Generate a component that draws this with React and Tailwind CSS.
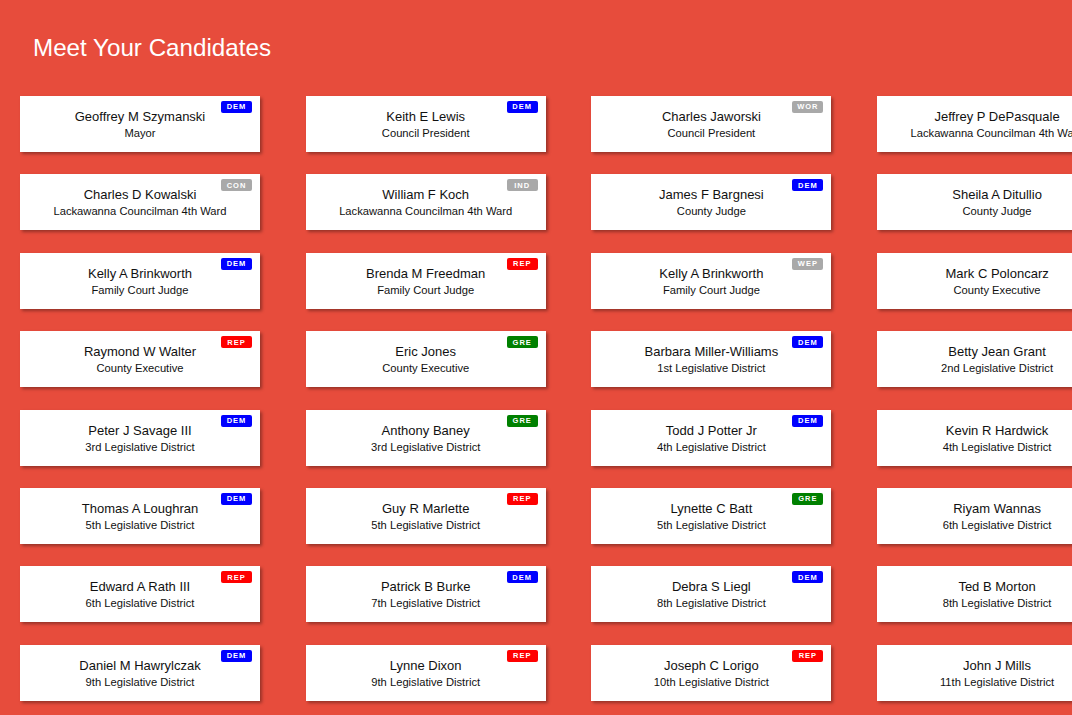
const badgeColors = {
  DEM: "bg-[#0000ff]",
  REP: "bg-[#ff0000]",
  GRE: "bg-[#008000]",
  WOR: "bg-[#a9a9a9]",
  CON: "bg-[#a9a9a9]",
  IND: "bg-[#a9a9a9]",
  WEP: "bg-[#a9a9a9]",
};

const candidates = [
  ["Geoffrey M Szymanski", "Mayor", "DEM"],
  ["Keith E Lewis", "Council President", "DEM"],
  ["Charles Jaworski", "Council President", "WOR"],
  ["Jeffrey P DePasquale", "Lackawanna Councilman 4th Ward", "DEM"],
  ["Charles D Kowalski", "Lackawanna Councilman 4th Ward", "CON"],
  ["William F Koch", "Lackawanna Councilman 4th Ward", "IND"],
  ["James F Bargnesi", "County Judge", "DEM"],
  ["Sheila A Ditullio", "County Judge", "REP"],
  ["Kelly A Brinkworth", "Family Court Judge", "DEM"],
  ["Brenda M Freedman", "Family Court Judge", "REP"],
  ["Kelly A Brinkworth", "Family Court Judge", "WEP"],
  ["Mark C Poloncarz", "County Executive", "DEM"],
  ["Raymond W Walter", "County Executive", "REP"],
  ["Eric Jones", "County Executive", "GRE"],
  ["Barbara Miller-Williams", "1st Legislative District", "DEM"],
  ["Betty Jean Grant", "2nd Legislative District", "DEM"],
  ["Peter J Savage III", "3rd Legislative District", "DEM"],
  ["Anthony Baney", "3rd Legislative District", "GRE"],
  ["Todd J Potter Jr", "4th Legislative District", "DEM"],
  ["Kevin R Hardwick", "4th Legislative District", "REP"],
  ["Thomas A Loughran", "5th Legislative District", "DEM"],
  ["Guy R Marlette", "5th Legislative District", "REP"],
  ["Lynette C Batt", "5th Legislative District", "GRE"],
  ["Riyam Wannas", "6th Legislative District", "DEM"],
  ["Edward A Rath III", "6th Legislative District", "REP"],
  ["Patrick B Burke", "7th Legislative District", "DEM"],
  ["Debra S Liegl", "8th Legislative District", "DEM"],
  ["Ted B Morton", "8th Legislative District", "REP"],
  ["Daniel M Hawrylczak", "9th Legislative District", "DEM"],
  ["Lynne Dixon", "9th Legislative District", "REP"],
  ["Joseph C Lorigo", "10th Legislative District", "REP"],
  ["John J Mills", "11th Legislative District", "REP"],
];

const CandidateCard = ({ name, office, party }) => (
  <div className="relative h-[56px] w-[240px] bg-white pt-[13px] text-center text-[#111] shadow-[2px_2px_3px_rgba(0,0,0,0.35)]">
    <span
      className={`absolute right-[8px] top-[5px] flex h-[12px] w-[31px] items-center justify-center rounded-[2px] text-[7.5px] font-bold tracking-[1px] text-white ${badgeColors[party]}`}
    >
      {party}
    </span>
    <p className="text-[13px] leading-4">{name}</p>
    <p className="mt-px whitespace-nowrap text-[11.2px] leading-[14px]">{office}</p>
  </div>
);

export default function App() {
  return (
    <div className="h-screen w-screen overflow-hidden bg-[#e74c3c] font-['Liberation_Sans',Arial,sans-serif]">
      <h1 className="pl-[33px] pt-[32px] text-[24.2px] font-normal leading-8 text-white">Meet Your Candidates</h1>
      <div className="mt-[32px] grid w-max grid-cols-[repeat(4,240px)] gap-x-[45.7px] gap-y-[22.4px] pl-5">
        {candidates.map(([name, office, party], i) => (
          <CandidateCard key={i} name={name} office={office} party={party} />
        ))}
      </div>
    </div>
  );
}
